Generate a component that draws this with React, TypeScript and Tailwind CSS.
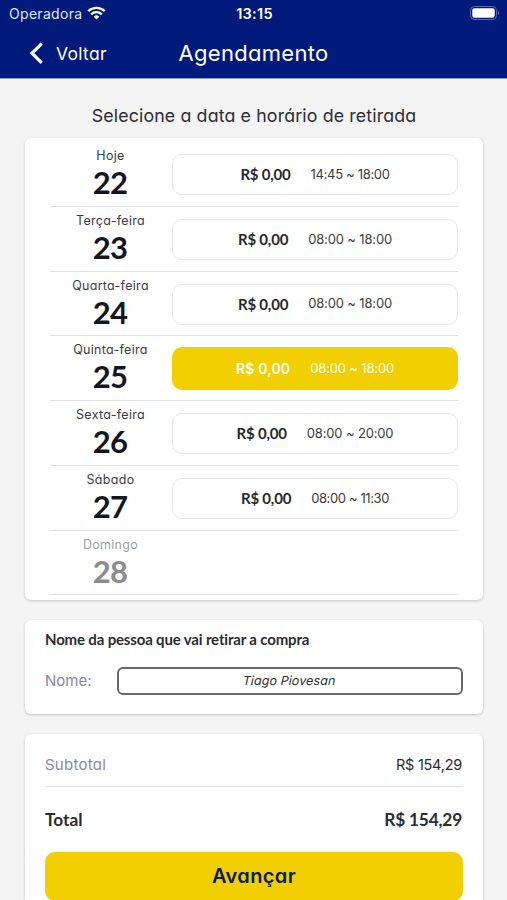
import { useState } from 'react';

interface Dia {
  nome: string;
  numero: number;
  horario?: string;
  espacamento?: string;
}

const DIAS: Dia[] = [
  { nome: 'Hoje', numero: 22, horario: '14:45 ~ 18:00', espacamento: 'tracking-[-0.32px]' },
  { nome: 'Terça-feira', numero: 23, horario: '08:00 ~ 18:00' },
  { nome: 'Quarta-feira', numero: 24, horario: '08:00 ~ 18:00' },
  { nome: 'Quinta-feira', numero: 25, horario: '08:00 ~ 18:00' },
  { nome: 'Sexta-feira', numero: 26, horario: '08:00 ~ 20:00' },
  { nome: 'Sábado', numero: 27, horario: '08:00 ~ 11:30', espacamento: 'tracking-[-0.38px]' },
  { nome: 'Domingo', numero: 28 },
];

function StatusBar() {
  return (
    <div className="grid h-7 grid-cols-3 items-center pl-[9px] pr-[7px] text-[14px] leading-none">
      <div className="flex items-center gap-[5px] text-[#dfe6ff]">
        <span className="tracking-[0.3px] [font-feature-settings:normal]">Operadora</span>
        <svg className="-mt-[3px]" width="19" height="14" viewBox="0 0 19 14" fill="none" stroke="#fff" strokeWidth="2.4">
          <path d="M1.2 5.2a12 12 0 0 1 16.6 0" />
          <path d="M4.2 8.3a7.6 7.6 0 0 1 10.6 0" />
          <path d="M9.5 13.5L6.7 10.7a4 4 0 0 1 5.6 0z" fill="#fff" stroke="none" />
        </svg>
      </div>
      <span className="text-center text-[14.5px] font-semibold tracking-[0.3px] [font-feature-settings:normal]">13:15</span>
      <svg className="-mt-[2px] justify-self-end" width="30" height="14" viewBox="0 0 30 14">
        <rect x="0.5" y="0.5" width="26" height="13" rx="4" fill="none" stroke="#5a6cb8" />
        <rect x="2.3" y="2.2" width="22.4" height="9.6" rx="2.2" fill="#fff" />
        <path d="M28 5v4a2.2 2.2 0 0 0 0-4z" fill="#5a6cb8" />
      </svg>
    </div>
  );
}

function LinhaDia({ dia, ativo, onSelect }: { dia: Dia; ativo: boolean; onSelect: () => void }) {
  return (
    <div className="flex h-[64.75px] items-start border-b border-[#e2e2e4]">
      <div className={`flex w-[121px] flex-col items-center pt-[6px] ${dia.horario ? 'text-[#15171f]' : 'text-[#8b8c8f]'}`}>
        <span className={`text-[12.5px] leading-4 tracking-[0.3px] ${dia.horario ? 'text-[#3a3c42]' : 'text-[#a0a0a3]'}`}>
          {dia.nome}
        </span>
        <span className="pt-px pr-px font-[Lato] text-[31px] font-bold leading-[34px] tracking-[-0.8px]">{dia.numero}</span>
      </div>
      {dia.horario && (
        <button
          onClick={onSelect}
          className={`ml-px flex w-[286px] items-center justify-center gap-5 rounded-[10px] text-[13px] ${
            ativo
              ? 'mt-[11px] h-[43px] bg-[#f1cf00] text-white'
              : 'mt-[12px] h-[41px] border border-[#e8e8ea] bg-white text-[#3a3c42]'
          }`}
        >
          {ativo ? (
            <span className="text-[14px] font-semibold tracking-[0.15px]">R$ 0,00</span>
          ) : (
            <span className="font-[Lato] text-[15px] font-bold tracking-[-0.2px] text-[#26282e]">R$ 0,00</span>
          )}
          <span className={dia.espacamento ?? 'tracking-[-0.15px]'}>{dia.horario}</span>
        </button>
      )}
    </div>
  );
}

export default function App() {
  const [selecionado, setSelecionado] = useState(25);
  const [nome, setNome] = useState('Tiago Piovesan');

  return (
    <div className="h-[900px] w-[507px] overflow-hidden bg-[#f4f4f4] font-[Inter,sans-serif] text-[#2b2d33] [font-feature-settings:'cv11']">
      <header className="h-[79px] border-b border-[#8b99cf] bg-[#001a7b] text-white">
        <StatusBar />
        <div className="grid h-[50px] grid-cols-[1fr_auto_1fr] items-center">
          <button className="flex items-center gap-[12px] pl-[29px] text-[17.5px] tracking-[0.3px]">
            <svg width="15" height="23" viewBox="0 0 15 23" fill="none" stroke="#fff" strokeWidth="3.2">
              <path d="M12.7 1.6L3 11.2l9.7 9.6" />
            </svg>
            <span className="pt-[2px]">Voltar</span>
          </button>
          <h1 className="text-[22px] tracking-[0.3px]">Agendamento</h1>
        </div>
      </header>

      <main className="pl-[25px] pr-[24px]">
        <h2 className="pt-[25px] text-center text-[17.8px] leading-6 tracking-[0.13px]">
          Selecione a data e horário de retirada
        </h2>

        <section className="mt-[10px] h-[462px] rounded-md bg-white px-[25px] pt-[4px] shadow-[0_1px_3px_rgba(0,0,0,0.2)]">
          {DIAS.map((dia) => (
            <LinhaDia
              key={dia.numero}
              dia={dia}
              ativo={dia.numero === selecionado}
              onSelect={() => setSelecionado(dia.numero)}
            />
          ))}
        </section>

        <section className="mt-[20px] h-[94px] rounded-md bg-white px-5 pt-[9px] shadow-[0_1px_3px_rgba(0,0,0,0.2)]">
          <h3 className="font-[Lato] text-[15px] font-bold leading-5 tracking-[-0.16px]">
            Nome da pessoa que vai retirar a compra
          </h3>
          <div className="mt-[18px] flex items-center">
            <label className="w-[71.5px] text-[15px] text-[#858aa3]">Nome:</label>
            <div className="h-[28px] flex-1 rounded-md border-2 border-[#66686c]">
              <input
                value={nome}
                onChange={(e) => setNome(e.target.value)}
                className="block h-[23px] w-full -skew-x-12 bg-transparent pr-[2px] text-center text-[12.5px] tracking-[0.1px] outline-none"
              />
            </div>
          </div>
        </section>

        <section className="mt-[20px] h-[200px] rounded-md bg-white px-5 pt-[11px] shadow-[0_1px_3px_rgba(0,0,0,0.2)]">
          <div className="flex h-[42px] items-center justify-between border-b border-[#e2e5e8] text-[15px]">
            <span className="tracking-[0.25px] text-[#858aa3]">Subtotal</span>
            <span className="pr-px pb-px text-[14.5px] tracking-[-0.25px]">R$ 154,29</span>
          </div>
          <div className="flex h-[65px] items-center justify-between pt-px font-[Lato] text-[17.3px] font-bold">
            <span>Total</span>
            <span className="pr-px tracking-[-0.2px]">R$ 154,29</span>
          </div>
          <button className="h-[49px] w-full rounded-[10px] bg-[#f1cf00] pb-[2px] text-[20px] font-semibold tracking-[0.4px] text-[#0b1c5e]">
            Avançar
          </button>
        </section>
      </main>
    </div>
  );
}
